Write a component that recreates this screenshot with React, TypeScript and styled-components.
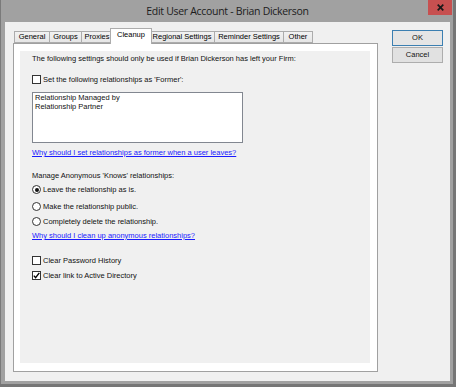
import React from "react";
import styled, { createGlobalStyle } from "styled-components";

const GlobalStyle = createGlobalStyle`
  html, body { margin: 0; padding: 0; background: #767676; }
  body { font-family: "Liberation Sans", Arial, sans-serif; }
  #root { width: 456px; height: 387px; }
`;

const Window = styled.div`
  width: 456px;
  height: 387px;
  box-sizing: border-box;
  background: #767676;
  padding: 0 3px 3px 0;
  display: flex;
`;

const Frame = styled.div`
  flex: 1;
  display: flex;
  flex-direction: column;
  background: #a1a1a1;
  border-left: 1px solid #7a7a7a;
  padding: 0 3px 3px 4px;
`;

const TitleBar = styled.div`
  height: 22px;
  flex: none;
  display: grid;
  grid-template-columns: 1fr auto 1fr;
  align-items: start;
`;

const Title = styled.div`
  grid-column: 2;
  line-height: 22px;
  font-family: "Open Sans", "Liberation Sans", sans-serif;
  font-size: 10.5px;
  letter-spacing: -0.3px;
  color: #1c1c1c;
  white-space: nowrap;
`;

const CloseButton = styled.div`
  grid-column: 3;
  justify-self: end;
  margin-right: -2px;
  width: 24px;
  height: 15px;
  background: #c75050;
  display: flex;
  align-items: center;
  justify-content: center;
`;

const Client = styled.div`
  flex: 1;
  display: flex;
  background: #f0f0f0;
  padding: 6px 0 9px 8px;
  gap: 14px;
`;

const LeftColumn = styled.div`
  width: 365px;
  display: flex;
  flex-direction: column;
`;

const TabStrip = styled.div`
  height: 15px;
  flex: none;
  display: flex;
  align-items: flex-end;
  padding-left: 1px;
  position: relative;
  z-index: 1;
`;

const Tab = styled.div<{ $w: number; $active?: boolean; $first?: boolean }>`
  box-sizing: border-box;
  width: ${(p) => p.$w}px;
  height: ${(p) => (p.$active ? 16 : 12)}px;
  margin-bottom: ${(p) => (p.$active ? -1 : 0)}px;
  margin-left: ${(p) => (p.$first ? 0 : p.$active ? -3 : -1)}px;
  margin-right: ${(p) => (p.$active ? -2 : 0)}px;
  position: relative;
  z-index: ${(p) => (p.$active ? 2 : 1)};
  border: 1px solid #acacac;
  border-bottom: ${(p) => (p.$active ? "none" : "1px solid #acacac")};
  background: ${(p) => (p.$active ? "#ffffff" : "linear-gradient(#f2f2f2, #e6e6e6)")};
  font-size: 7.5px;
  line-height: ${(p) => (p.$active ? 12 : 10)}px;
  text-align: center;
  color: #000;
  white-space: nowrap;
`;

const TabBody = styled.div`
  flex: 1;
  display: flex;
  border: 1px solid #a0a0a0;
  background: #ffffff;
  padding: 7px 7px 8px 6px;
`;

const Page = styled.div`
  flex: 1;
  background: #f0f0f0;
  padding: 3px 0 0 12px;
  display: flex;
  flex-direction: column;
  align-items: flex-start;
`;

const Label = styled.div<{ $mt?: number }>`
  margin-top: ${(p) => p.$mt ?? 0}px;
  font-size: 7.5px;
  line-height: 9px;
  color: #111;
  white-space: nowrap;
`;

const Link = styled.a<{ $mt?: number }>`
  margin-top: ${(p) => p.$mt ?? 0}px;
  font-size: 7.5px;
  line-height: 9px;
  color: #1a1aff;
  text-decoration: underline;
  white-space: nowrap;
  cursor: pointer;
`;

const OptionRow = styled.div<{ $mt?: number }>`
  margin-top: ${(p) => p.$mt ?? 0}px;
  height: 11px;
  display: flex;
  align-items: center;
  gap: 2px;
  font-size: 7.5px;
  color: #111;
  white-space: nowrap;
`;

const Box = styled.span`
  box-sizing: border-box;
  width: 9px;
  height: 9px;
  border: 1px solid #333333;
  background: #ffffff;
  display: flex;
  align-items: center;
  justify-content: center;
  flex: none;
`;

const Radio = styled.span<{ $on?: boolean }>`
  box-sizing: border-box;
  width: 9px;
  height: 9px;
  border-radius: 50%;
  border: 1px solid #333333;
  background: #ffffff;
  display: flex;
  align-items: center;
  justify-content: center;
  flex: none;
  &::after {
    content: "";
    display: ${(p) => (p.$on ? "block" : "none")};
    width: 4px;
    height: 4px;
    border-radius: 50%;
    background: #111;
  }
`;

const ListBox = styled.div<{ $mt?: number }>`
  margin-top: ${(p) => p.$mt ?? 0}px;
  box-sizing: border-box;
  width: 211px;
  height: 51px;
  border: 1px solid #828790;
  background: #ffffff;
  padding: 0 2px;
`;

const ListItem = styled.div`
  font-size: 7.5px;
  line-height: 9px;
  color: #111;
  white-space: nowrap;
`;

const ButtonColumn = styled.div`
  display: flex;
  flex-direction: column;
  gap: 1px;
  padding-top: 2px;
`;

const Button = styled.div<{ $default?: boolean }>`
  box-sizing: border-box;
  width: 51px;
  height: 16px;
  border: 1px solid ${(p) => (p.$default ? "#3c7fb1" : "#adadad")};
  background: ${(p) => (p.$default ? "#e5e5e5" : "#e1e1e1")};
  font-size: 7.5px;
  line-height: 14px;
  text-align: center;
  color: #111;
`;

const CheckBox: React.FC<{ checked?: boolean; label: string; mt?: number }> = ({ checked, label, mt }) => (
  <OptionRow $mt={mt}>
    <Box>
      {checked && (
        <svg width="7" height="7" viewBox="0 0 7 7">
          <path d="M0.8 3.6 L2.6 5.6 L6.3 0.9" fill="none" stroke="#000" strokeWidth="1.4" />
        </svg>
      )}
    </Box>
    <span>{label}</span>
  </OptionRow>
);

const RadioOption: React.FC<{ on?: boolean; label: string; mt?: number }> = ({ on, label, mt }) => (
  <OptionRow $mt={mt}>
    <Radio $on={on} />
    <span>{label}</span>
  </OptionRow>
);

const tabs = [
  { label: "General", w: 36 },
  { label: "Groups", w: 33 },
  { label: "Proxies", w: 32 },
  { label: "Cleanup", w: 42, active: true },
  { label: "Regional Settings", w: 66 },
  { label: "Reminder Settings", w: 70 },
  { label: "Other", w: 30 },
];

export default function App() {
  return (
    <>
      <GlobalStyle />
      <Window>
        <Frame>
          <TitleBar>
            <Title>Edit User Account - Brian Dickerson</Title>
            <CloseButton>
              <svg width="7" height="7" viewBox="0 0 7 7">
                <path d="M0.7 0.7 L6.3 6.3 M6.3 0.7 L0.7 6.3" stroke="#1a1a1a" strokeWidth="1.7" />
              </svg>
            </CloseButton>
          </TitleBar>
          <Client>
            <LeftColumn>
              <TabStrip>
                {tabs.map((t, i) => (
                  <Tab key={t.label} $w={t.w} $active={t.active} $first={i === 0}>
                    {t.label}
                  </Tab>
                ))}
              </TabStrip>
              <TabBody>
                <Page>
                  <Label>The following settings should only be used if Brian Dickerson has left your Firm:</Label>
                  <CheckBox mt={11} label="Set the following relationships as 'Former':" />
                  <ListBox $mt={7}>
                    <ListItem>Relationship Managed by</ListItem>
                    <ListItem>Relationship Partner</ListItem>
                  </ListBox>
                  <Link $mt={5}>Why should I set relationships as former when a user leaves?</Link>
                  <Label $mt={14}>Manage Anonymous 'Knows' relationships:</Label>
                  <RadioOption mt={4} on label="Leave the relationship as is." />
                  <RadioOption mt={6} label="Make the relationship public." />
                  <RadioOption mt={4} label="Completely delete the relationship." />
                  <Link $mt={4}>Why should I clean up anonymous relationships?</Link>
                  <CheckBox mt={15} label="Clear Password History" />
                  <CheckBox mt={4} checked label="Clear link to Active Directory" />
                </Page>
              </TabBody>
            </LeftColumn>
            <ButtonColumn>
              <Button $default>OK</Button>
              <Button>Cancel</Button>
            </ButtonColumn>
          </Client>
        </Frame>
      </Window>
    </>
  );
}
